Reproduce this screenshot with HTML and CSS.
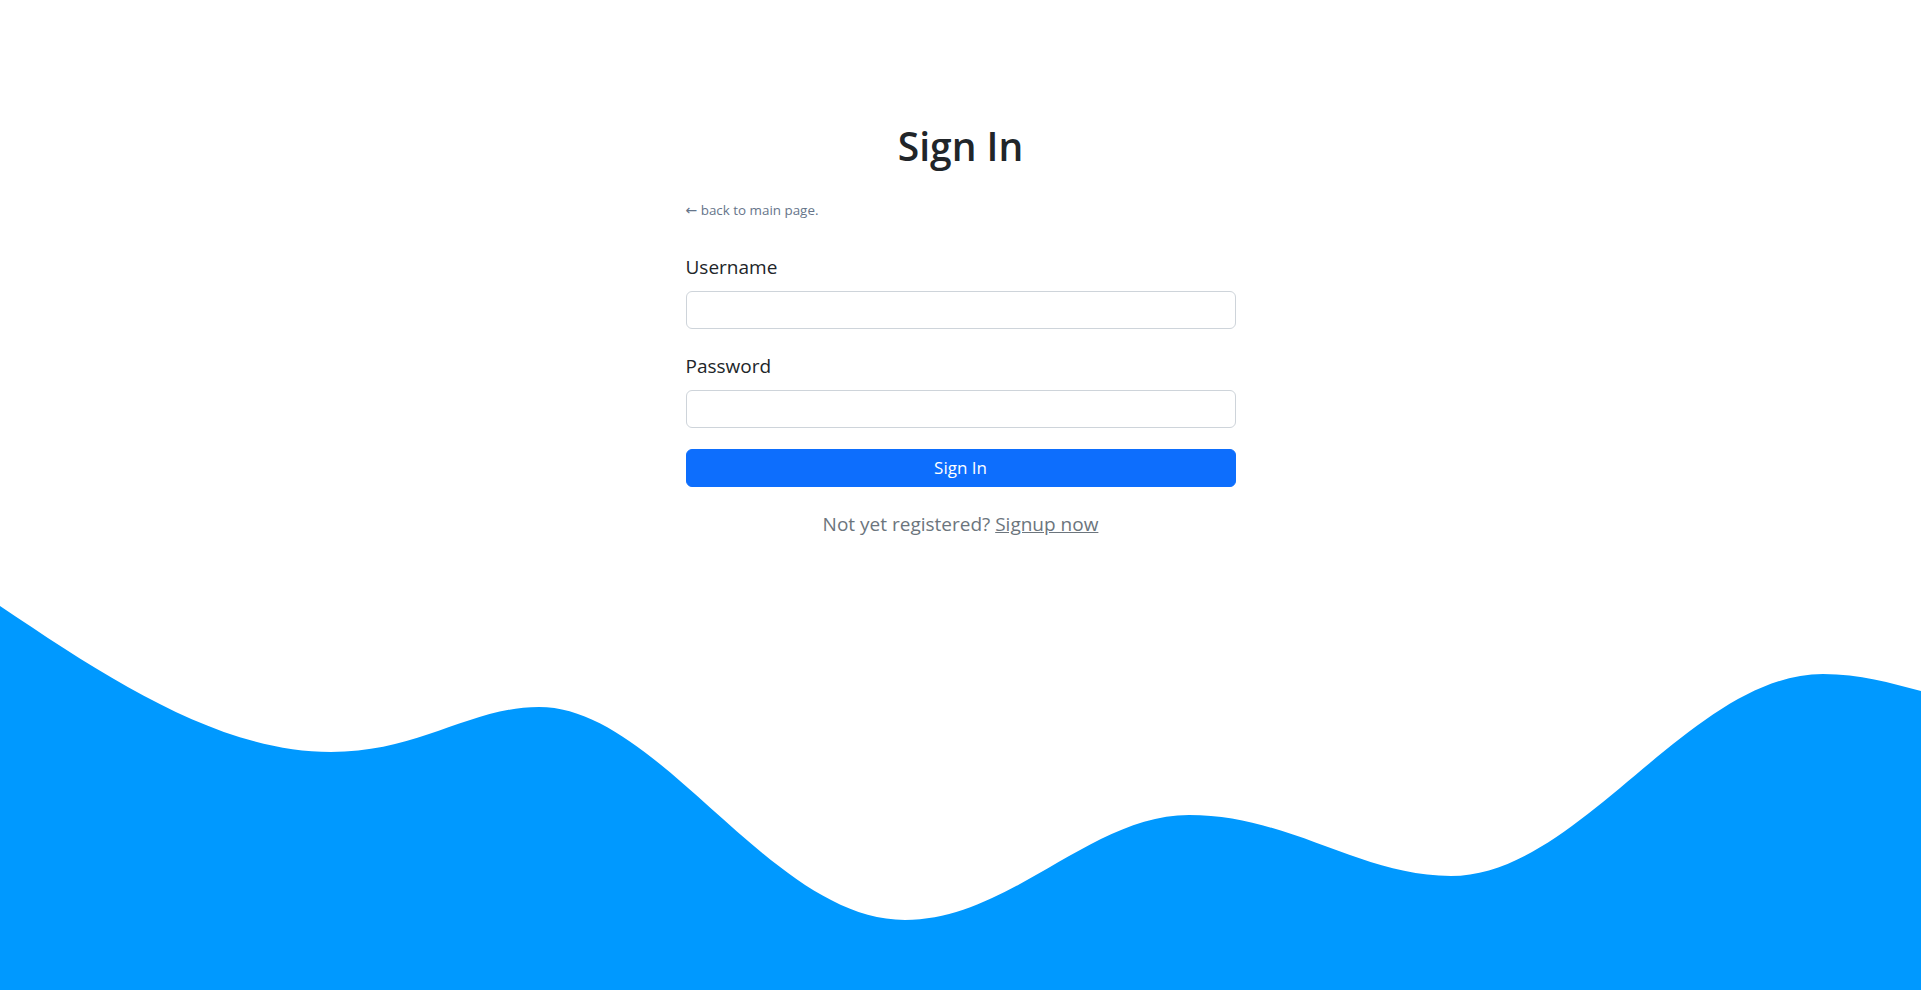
FILE: index.html
```html
<!DOCTYPE html>
<html lang="en">
<head>
<meta charset="utf-8">
<title>Sign In</title>
<link rel="stylesheet" href="styles.css">
</head>
<body>
<div class="page">
  <main class="signin">
    <h1 class="title">Sign In</h1>
    <a class="back" href="#"><span class="arrow">←</span> back to main page.</a>
    <form class="form">
      <div class="field">
        <label class="label" for="username">Username</label>
        <input class="input" id="username" type="text">
      </div>
      <div class="field">
        <label class="label" for="password">Password</label>
        <input class="input" id="password" type="password">
      </div>
      <button class="btn" type="button">Sign In</button>
    </form>
    <p class="register">Not yet registered? <a href="#">Signup now</a></p>
  </main>
  <svg class="wave" viewBox="0 0 1921 385" preserveAspectRatio="none" aria-hidden="true">
    <path fill="#0099ff" d="M0,1 C110,75 220,147 331,147 C420,147 470,102 539,102 C660,102 770,315 905,315 C1010,315 1090,210 1189,210 C1290,210 1360,271 1451,271 C1580,271 1690,69 1823,69 C1860,69 1890,78 1921,86 L1921,385 L0,385 Z"/>
  </svg>
</div>
</body>
</html>
```
FILE: styles.css
```css
* { box-sizing: border-box; }
html, body {
  margin: 0;
  padding: 0;
  background: #fff;
}
body {
  font-family: "Open Sans", "Noto Sans", sans-serif;
  color: #212529;
  overflow: hidden;
}
.page {
  position: relative;
  height: 100vh;
  display: flex;
  justify-content: center;
}
.signin {
  position: relative;
  z-index: 1;
  width: 550px;
  padding-top: 123px;
  display: flex;
  flex-direction: column;
}
.title {
  margin: 0;
  font-size: 39px;
  line-height: 46px;
  font-weight: 600;
  text-align: center;
  color: #212529;
}
.back {
  margin-top: 31px;
  height: 20px;
  font-size: 13.4px;
  line-height: 20px;
  color: #66758a;
  text-decoration: none;
  align-self: flex-start;
}
.arrow {
  font-family: "DejaVu Sans", sans-serif;
  font-size: 14px;
  line-height: 0;
}
.form {
  margin-top: 33px;
  display: flex;
  flex-direction: column;
}
.field {
  display: flex;
  flex-direction: column;
  margin-bottom: 23px;
}
.label {
  font-size: 19px;
  line-height: 28px;
  margin-bottom: 10px;
  color: #212529;
}
.input {
  height: 38px;
  width: 100%;
  border: 1px solid #ced4da;
  border-radius: 6px;
  padding: 6px 12px;
  font: inherit;
  font-size: 16px;
  background: #fff;
}
.field + .field { margin-bottom: 21px; }
.btn {
  height: 38px;
  width: 100%;
  border: 1px solid #0d6efd;
  border-radius: 6px;
  background: #0d6efd;
  color: #fff;
  font-family: inherit;
  font-size: 17px;
  line-height: 36px;
  padding: 0;
}
.register {
  margin: 23px 0 0;
  font-size: 19px;
  line-height: 28px;
  text-align: center;
  color: #6c757d;
}
.register a {
  color: #6c757d;
  text-decoration: underline;
}
.wave {
  position: absolute;
  left: 0;
  bottom: 0;
  width: 100%;
  height: 385px;
  display: block;
}
```
